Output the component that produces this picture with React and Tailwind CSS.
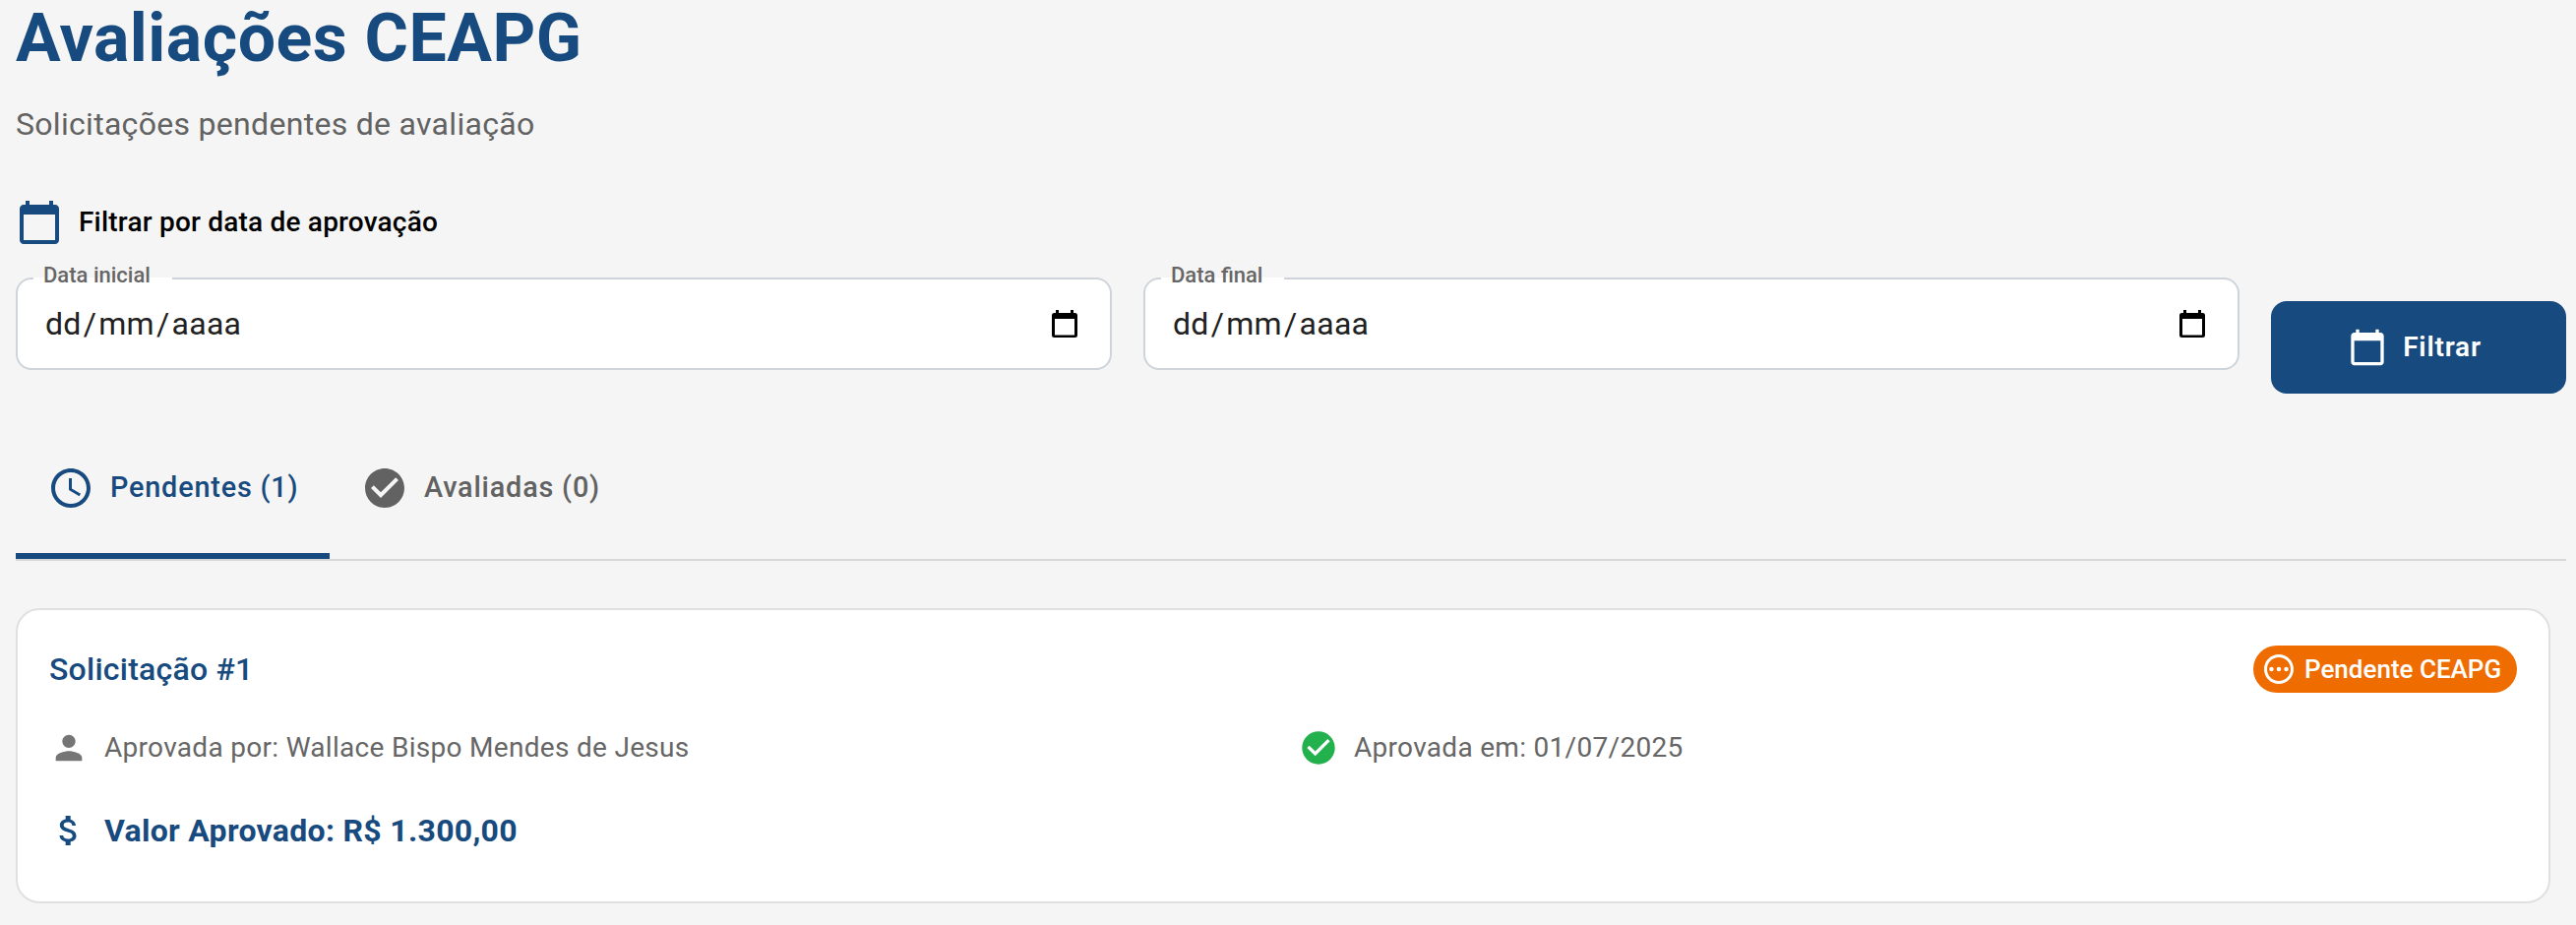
import React from "react";
import {
  MdCalendarToday,
  MdAccessTime,
  MdCheckCircle,
  MdOutlinePending,
  MdPerson,
  MdAttachMoney,
} from "react-icons/md";

function PickerIcon() {
  return (
    <svg viewBox="0 0 26 28" className="h-7 w-[26px] text-black" fill="currentColor">
      <path
        fillRule="evenodd"
        d="M4 0h3v3h12V0h3v3h1.5A2.5 2.5 0 0 1 26 5.5v20a2.5 2.5 0 0 1-2.5 2.5h-21A2.5 2.5 0 0 1 0 25.5v-20A2.5 2.5 0 0 1 2.500 3H4zM3 9v16.400h20V9z"
      />
    </svg>
  );
}

function DateField({ label, notch }) {
  return (
    <div className="relative flex h-[94px] flex-1 items-center justify-between rounded-2xl border-2 border-[#ced4da] bg-white pr-[33px] pb-px pl-[26px]">
      <span className={`absolute -top-0.5 left-4 h-0.5 bg-white ${notch}`} />
      <span className="absolute -top-[18px] left-[26px] text-[22px] leading-7 font-medium whitespace-nowrap text-[#666]">
        {label}
      </span>
      <span className="flex gap-0.5 px-0.5 text-[32px] leading-[46px] tracking-[0.3px] text-[#212121]">
        <span>dd</span>
        <span>/</span>
        <span>mm</span>
        <span>/</span>
        <span>aaaa</span>
      </span>
      <PickerIcon />
    </div>
  );
}

export default function App() {
  return (
    <main className="h-[940px] w-[2618px] overflow-hidden bg-[#f5f5f5] pr-[10px] pl-4 font-['Roboto',sans-serif]">
      <h1 className="h-[78px] text-[68px] leading-[78px] font-bold tracking-[0.5px] text-[#174a7e]">
        Avaliações CEAPG
      </h1>
      <p className="mt-6 h-12 text-[32px] leading-12 tracking-[0.3px] text-[#626262]">
        Solicitações pendentes de avaliação
      </p>

      <section className="mt-[52px]">
        <div className="flex h-12 items-center gap-4">
          <MdCalendarToday className="size-12 text-[#174a7e]" />
          <h2 className="text-[28px] leading-11 font-medium tracking-[0.2px] text-black">
            Filtrar por data de aprovação
          </h2>
        </div>
        <div className="mt-8 flex gap-8">
          <DateField label="Data inicial" notch="w-[141px]" />
          <DateField label="Data final" notch="w-[125px]" />
          <button className="mt-6 flex h-[94px] w-[300px] items-center justify-center gap-4 rounded-2xl bg-[#174a7e] text-[28px] font-semibold tracking-[0.8px] text-white">
            <MdCalendarToday className="-ml-2 size-10" />
            Filtrar
          </button>
        </div>
      </section>

      <nav className="mt-6 flex h-[146px] border-b-2 border-[#d8d8d8] text-[28.8px] font-medium">
        <button className="flex w-[319px] items-center gap-4 border-b-6 border-[#174a7e] px-8 pt-1.5 tracking-[0.82px] text-[#174a7e]">
          <MdAccessTime className="size-12 shrink-0" />
          <span className="whitespace-nowrap">Pendentes (1)</span>
        </button>
        <button className="flex items-center gap-4 border-b-6 border-transparent px-8 pt-1.5 tracking-[0.82px] text-[#626262]">
          <MdCheckCircle className="size-12 shrink-0" />
          <span className="whitespace-nowrap">Avaliadas (0)</span>
        </button>
      </nav>

      <article className="mt-12 mr-4 h-[300px] rounded-3xl border-2 border-[#e0e0e0] bg-white px-8 pt-9">
        <div className="flex h-12 items-center justify-between">
          <h3 className="text-[32px] leading-12 font-medium tracking-[0.24px] text-[#174a7e]">
            Solicitação #1
          </h3>
          <span className="flex h-12 w-[268px] items-center gap-2 rounded-full bg-[#ef6c00] pl-2 text-[26px] font-medium whitespace-nowrap text-white">
            <MdOutlinePending className="size-9 shrink-0" />
            Pendente CEAPG
          </span>
        </div>
        <div className="mt-9 grid grid-cols-2 gap-x-8 text-[28px] leading-10 tracking-[0.3px] text-[#666]">
          <div className="flex items-center gap-4">
            <MdPerson className="size-10 text-[#757575]" />
            Aprovada por: Wallace Bispo Mendes de Jesus
          </div>
          <div className="flex items-center gap-4">
            <MdCheckCircle className="size-10 text-[#22b14c]" />
            Aprovada em: 01/07/2025
          </div>
        </div>
        <div className="mt-11 flex h-10 items-center gap-4 text-[32px] leading-10 font-bold tracking-[0.3px] text-[#174a7e]">
          <MdAttachMoney className="size-10" />
          Valor Aprovado: R$ 1.300,00
        </div>
      </article>
    </main>
  );
}
